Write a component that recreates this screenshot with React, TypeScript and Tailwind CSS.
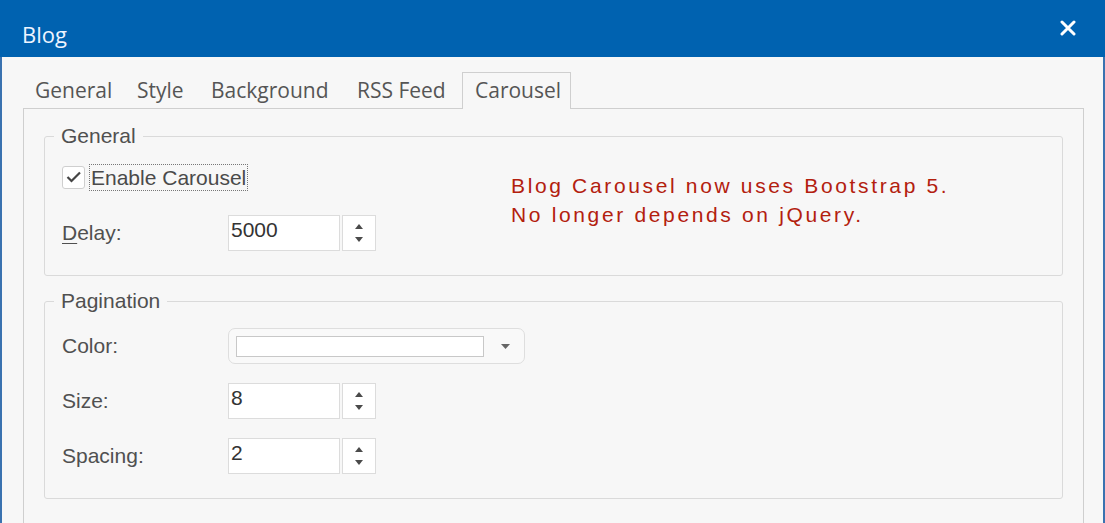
import { useState } from "react";

const tabs = [
  { label: "General", w: "w-[102px]" },
  { label: "Style", w: "w-[74px]" },
  { label: "Background", w: "w-[146px]" },
  { label: "RSS Feed", w: "w-[117px]" },
  { label: "Carousel", w: "w-[109px]" },
];

const Spinner = () => (
  <div className="ml-[2px] flex h-[36px] w-[34px] flex-col items-center justify-center gap-[8px] border border-[#dcdcdc] bg-white">
    <svg width="8" height="5" viewBox="0 0 8 5">
      <path d="M4 0L8 5H0Z" fill="#4a4a4a" />
    </svg>
    <svg width="8" height="5" viewBox="0 0 8 5">
      <path d="M0 0H8L4 5Z" fill="#4a4a4a" />
    </svg>
  </div>
);

const NumberField = ({ value }: { value: string }) => (
  <div className="flex">
    <div className="h-[36px] w-[112px] border border-[#dcdcdc] bg-white pl-[2px] pt-[2px] text-[21px] leading-[24px] text-[#333]">
      {value}
    </div>
    <Spinner />
  </div>
);

const Row = ({ label, children, underline }: { label: string; children: React.ReactNode; underline?: boolean }) => (
  <div className="flex h-[36px] items-center">
    <div className="w-[166px] text-[21px] text-[#505050]">
      {underline ? (
        <>
          <span className="underline underline-offset-[3px] decoration-1">D</span>
          {label.slice(1)}
        </>
      ) : (
        label
      )}
    </div>
    {children}
  </div>
);

export default function App() {
  const [active] = useState(4);

  return (
    <div className="h-[523px] w-[1105px] overflow-hidden bg-[#f7f7f7] font-['Liberation_Sans',Arial,sans-serif]">
      {/* title bar */}
      <div className="flex h-[57px] items-center justify-between bg-[#0062b0] pl-[22px] pr-[29px]">
        <span className="pt-[12px] font-['Open_Sans',sans-serif] text-[22px] text-[#eef4ff]">Blog</span>
        <svg width="16" height="16" viewBox="0 0 16 16" className="-mt-[2px]">
          <path d="M2 2L14 14M14 2L2 14" stroke="#ffffff" strokeWidth="3" strokeLinecap="round" />
        </svg>
      </div>

      <div className="h-[466px] border-l-2 border-r-2 border-[#3a72b0] pl-[21px] pr-[19px] pt-[15px]">
        {/* tabs */}
        <div className="relative z-10 flex h-[36px] font-['Open_Sans',sans-serif] text-[21px] text-[#555]">
          {tabs.map((t, i) => (
            <div
              key={t.label}
              className={`${t.w} flex h-[37px] items-center pl-[12px] ${
                i === active ? "border border-b-0 border-[#cfcfcf] bg-[#f7f7f7]" : ""
              }`}
            >
              {t.label}
            </div>
          ))}
        </div>

        {/* pane */}
        <div className="h-[420px] border border-[#cfcfcf] bg-[#f7f7f7] px-[20px] pt-[16px]">
          <fieldset className="rounded-[3px] border border-[#dadada] pb-[24px] pl-[17px]">
            <legend className="-ml-[8px] px-[7px] text-[21px] leading-[22px] text-[#505050]">General</legend>
            <div className="flex">
              <div className="flex flex-col">
                <div className="mt-[16px] flex h-[28px] items-center">
                  <div className="flex h-[23px] w-[23px] items-center justify-center rounded-[3px] border border-[#cfcfcf] bg-white">
                    <svg width="16" height="12" viewBox="0 0 16 12">
                      <path d="M1.5 6L5.5 10L14 1.5" stroke="#444" strokeWidth="2.2" fill="none" />
                    </svg>
                  </div>
                  <span className="ml-[4px] border border-dotted border-[#777] px-[1px] text-[21px] leading-[25px] text-[#4a4a4a]">
                    Enable Carousel
                  </span>
                </div>
                <div className="mt-[24px]">
                  <Row label="Delay:" underline>
                    <NumberField value="5000" />
                  </Row>
                </div>
              </div>
              <div className="ml-[135px] pt-[24px] text-[21px] leading-[29px] tracking-[2.65px] text-[#b3200e]">
                <div>Blog Carousel now uses Bootstrap 5.</div>
                <div>No longer depends on jQuery.</div>
              </div>
            </div>
          </fieldset>

          <fieldset className="mt-[14px] rounded-[3px] border border-[#dadada] pb-[24px] pl-[17px]">
            <legend className="-ml-[8px] px-[7px] text-[21px] leading-[22px] text-[#505050]">Pagination</legend>
            <div className="mt-[16px] flex flex-col gap-[19px]">
              <Row label="Color:">
                <div className="flex h-[36px] w-[297px] items-center rounded-[7px] border border-[#dedede] bg-[#f9f9f9] pl-[7px]">
                  <div className="h-[21px] w-[248px] border border-[#c8c8c8] bg-white" />
                  <svg width="9" height="5" viewBox="0 0 9 5" className="ml-[17px]">
                    <path d="M0 0H9L4.5 5Z" fill="#666" />
                  </svg>
                </div>
              </Row>
              <Row label="Size:">
                <NumberField value="8" />
              </Row>
              <Row label="Spacing:">
                <NumberField value="2" />
              </Row>
            </div>
          </fieldset>
        </div>
      </div>
    </div>
  );
}
